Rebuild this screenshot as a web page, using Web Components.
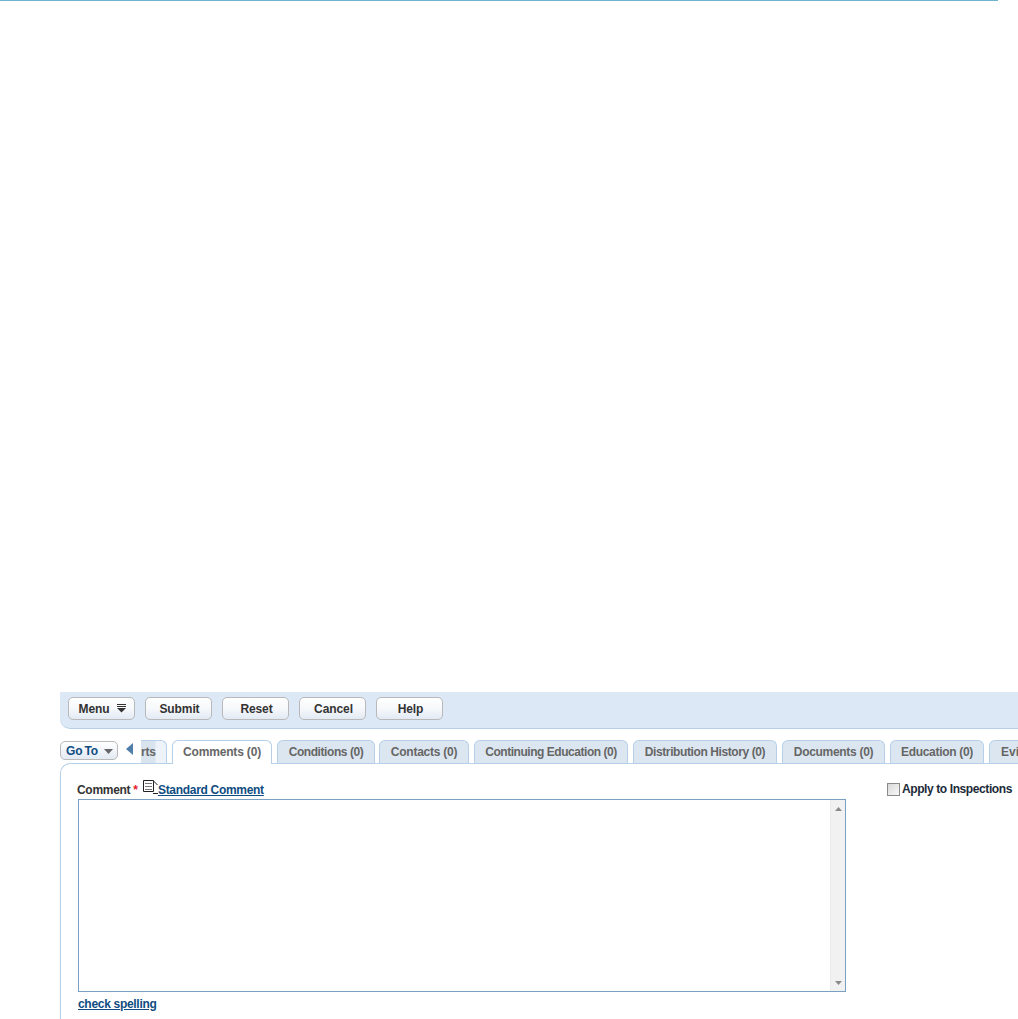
<!DOCTYPE html>
<html>
<head>
<meta charset="utf-8">
<title>Comments</title>
<style>
  html, body { margin: 0; padding: 0; background: #fff; }
  body { font: bold 12px "Liberation Sans", Arial, sans-serif; overflow: hidden; height: 1019px; }
</style>
</head>
<body>
<record-page>
  <tool-bar>
    <ui-button menu>Menu</ui-button>
    <ui-button>Submit</ui-button>
    <ui-button>Reset</ui-button>
    <ui-button>Cancel</ui-button>
    <ui-button>Help</ui-button>
  </tool-bar>
  <tab-strip>
    <tab-item clipped>rts</tab-item>
    <tab-item active style="width:100px;letter-spacing:-.17px">Comments (0)</tab-item>
    <tab-item style="width:98px;margin-right:-1px;letter-spacing:-.43px">Conditions (0)</tab-item>
    <tab-item style="width:90px;letter-spacing:-.25px">Contacts (0)</tab-item>
    <tab-item style="width:154px;letter-spacing:-.46px">Continuing Education (0)</tab-item>
    <tab-item style="width:144px;letter-spacing:-.4px">Distribution History (0)</tab-item>
    <tab-item style="width:103px;letter-spacing:-.3px">Documents (0)</tab-item>
    <tab-item style="width:94px;letter-spacing:-.3px">Education (0)</tab-item>
    <tab-item style="width:90px;justify-content:flex-start;padding-left:11px">Evi</tab-item>
  </tab-strip>
  <comment-panel></comment-panel>
</record-page>

<script>
class RecordPage extends HTMLElement {
  constructor() {
    super();
    this.attachShadow({ mode: 'open' }).innerHTML = `
      <style>
        :host { display: block; height: 1019px; overflow: hidden; }
        .rule { height: 1px; width: 998px; background: #6fb3cf; }
        .body { padding: 691px 0 0 60px; }
      </style>
      <div class="rule"></div>
      <div class="body"><slot></slot></div>
    `;
  }
}

class ToolBar extends HTMLElement {
  constructor() {
    super();
    this.attachShadow({ mode: 'open' }).innerHTML = `
      <style>
        :host {
          display: flex; gap: 10px; box-sizing: border-box; height: 37px;
          padding: 5px 0 0 8px; background: #dce8f5;
          border-bottom: 1px solid #b5d0e8;
          border-bottom-left-radius: 10px;
        }
      </style>
      <slot></slot>
    `;
  }
}

class UiButton extends HTMLElement {
  constructor() {
    super();
    const menu = this.hasAttribute('menu');
    this.attachShadow({ mode: 'open' }).innerHTML = `
      <style>
        :host {
          display: flex; align-items: center; justify-content: center; gap: 8px;
          box-sizing: border-box; width: 67px; height: 23px; padding-left: 2px;
          border: 1px solid #b9b9b9; border-radius: 5px;
          background: linear-gradient(#fff 0%, #f6f8fb 50%, #e3eaf4 100%);
          color: #333; font: bold 12px "Liberation Sans", Arial, sans-serif;
          letter-spacing: -.1px;
        }
        svg { display: block; }
      </style>
      <slot></slot>
      ${menu ? '<svg width="9" height="9" viewBox="0 0 9 9"><path d="M0 .500h9M0 2.500h9" stroke="#333" fill="none"/><path d="M0 4h9L4.500 8.500z" fill="#333"/></svg>' : ''}
    `;
  }
}

class TabStrip extends HTMLElement {
  constructor() {
    super();
    this.attachShadow({ mode: 'open' }).innerHTML = `
      <style>
        :host {
          display: flex; gap: 5px; position: relative; height: 23px;
          margin-top: 11px; padding-left: 81px; white-space: nowrap;
          z-index: 1;
        }
        .goto {
          position: absolute; left: 0; top: 1px; box-sizing: border-box;
          width: 58px; height: 19px; display: flex; align-items: center; gap: 6px;
          padding-left: 5px; border: 1px solid #b9b9b9; border-radius: 5px;
          background: linear-gradient(#fff, #e3eaf4); color: #0f4c81;
          font: bold 12px "Liberation Sans", Arial, sans-serif;
          letter-spacing: -.2px; word-spacing: -1px;
        }
        .goto svg { display: block; margin-top: 1px; }
        .back { position: absolute; left: 66px; top: 3px; display: block; }
      </style>
      <div class="goto">Go To<svg width="9" height="5" viewBox="0 0 9 5"><path d="M0 0h9L4.500 5z" fill="#666"/></svg></div>
      <svg class="back" width="7" height="12" viewBox="0 0 7 12"><path d="M7 0v12L0 6z" fill="#4f7ea8"/></svg>
      <slot></slot>
    `;
  }
}

class TabItem extends HTMLElement {
  constructor() {
    super();
    this.attachShadow({ mode: 'open' }).innerHTML = `
      <style>
        :host {
          display: flex; justify-content: center; flex: none; box-sizing: border-box; height: 23px;
          padding: 3px 0 0; border: 1px solid #b5d0e8; border-bottom: 0;
          border-radius: 6px 6px 0 0; background: #dce6f1; color: #666;
          font: bold 12px/16px "Liberation Sans", Arial, sans-serif;
        }
        :host([active]) { background: #fff; height: 24px; }
        :host([clipped]) {
          width: 26px; padding: 3px 0 0; justify-content: flex-start; border-left: 0; border-radius: 0 6px 0 0;
          letter-spacing: -.2px;
          background: linear-gradient(90deg, #d9e4ef 0, #d9e4ef 14px, #eef3f9 15px, #eef3f9 100%);
        }
      </style>
      <slot></slot>
    `;
  }
}

class CommentPanel extends HTMLElement {
  constructor() {
    super();
    this.attachShadow({ mode: 'open' }).innerHTML = `
      <style>
        :host {
          display: block; box-sizing: border-box; height: 300px;
          padding: 19px 0 0 17px; border: 1px solid #b5d0e8; border-right: 0;
          border-bottom: 0; border-top-left-radius: 10px; background: #fff;
          color: #333; font: bold 12px "Liberation Sans", Arial, sans-serif;
        }
        .head { display: flex; width: 935px; justify-content: space-between; height: 16px; letter-spacing: -.3px; }
        .label { display: flex; align-items: flex-start; margin-left: -1px; }
        .req { color: #e21a2c; margin: 0 5px 0 3px; font-size: 12px; letter-spacing: 0; }
        .doc { display: block; margin-top: -3px; flex: none; }
        a { color: #0f4c81; text-decoration: underline; letter-spacing: -.3px; }
        .apply { display: flex; gap: 2px; margin: -1px 1px 0 0; color: #1c2b3a; letter-spacing: -.4px; }
        .check {
          width: 11px; height: 11px; margin-top: 1px; border: 1px solid #8a8a8a;
          background: linear-gradient(135deg, #d8d8d8, #f8f8f8);
        }
        .box {
          display: flex; box-sizing: border-box; width: 768px; height: 193px;
          border: 1px solid #7a9fc0; background: #fff;
        }
        textarea { flex: 1; border: 0; outline: 0; resize: none; padding: 0; overflow: hidden; }
        .bar {
          width: 15px; display: flex; flex-direction: column; justify-content: space-between;
          align-items: center; background: #f1f1f1; border-left: 1px solid #ebebeb;
          padding: 7px 0 6px; box-sizing: border-box;
        }
        .bar svg { display: block; }
        .foot { margin-top: 5px; }
      </style>
      <div class="head">
        <div class="label">Comment<span class="req">*</span>
          <svg class="doc" width="15" height="15" viewBox="0 0 15 15">
            <path d="M.5.500h10v11H.5z" fill="#fff" stroke="#222"/>
            <path d="M2 3.500h7M2 6.500h7M2 9.500h7" stroke="#777" fill="none"/>
            <path d="M10.500 1l4 4M10 13.500h5" stroke="#222" fill="none"/>
          </svg>
          <a href="#">Standard Comment</a>
        </div>
        <label class="apply"><span class="check"></span>Apply to Inspections</label>
      </div>
      <div class="box">
        <textarea aria-label="Comment"></textarea>
        <div class="bar">
          <svg width="7" height="4" viewBox="0 0 7 4"><path d="M3.500 0L7 4H0z" fill="#8a8a8a"/></svg>
          <svg width="7" height="4" viewBox="0 0 7 4"><path d="M0 0h7L3.500 4z" fill="#8a8a8a"/></svg>
        </div>
      </div>
      <div class="foot"><a href="#">check spelling</a></div>
    `;
  }
}

customElements.define('record-page', RecordPage);
customElements.define('tool-bar', ToolBar);
customElements.define('ui-button', UiButton);
customElements.define('tab-strip', TabStrip);
customElements.define('tab-item', TabItem);
customElements.define('comment-panel', CommentPanel);
</script>
</body>
</html>
